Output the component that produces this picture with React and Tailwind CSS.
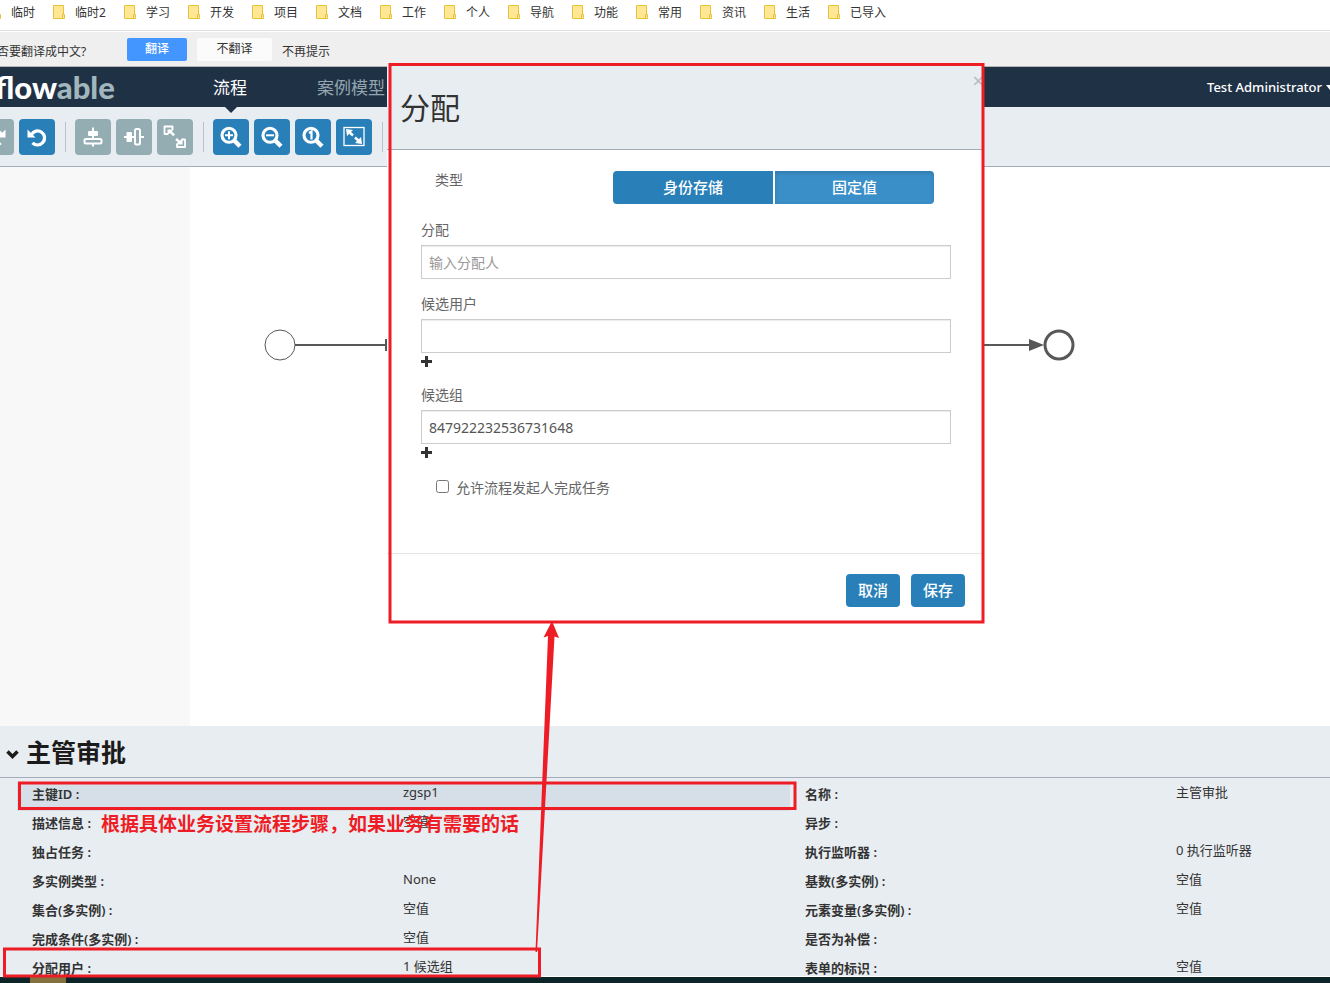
import React, { useState } from "react";

const bookmarks = ["临时", "临时2", "学习", "开发", "项目", "文档", "工作", "个人", "导航", "功能", "常用", "资讯", "生活", "已导入"];

const leftProps = [
  ["主键ID", "zgsp1"],
  ["描述信息", "空值"],
  ["独占任务", ""],
  ["多实例类型", "None"],
  ["集合(多实例)", "空值"],
  ["完成条件(多实例)", "空值"],
  ["分配用户", "1 候选组"],
];

const rightProps = [
  ["名称", "主管审批"],
  ["异步", ""],
  ["执行监听器", "0 执行监听器"],
  ["基数(多实例)", "空值"],
  ["元素变量(多实例)", "空值"],
  ["是否为补偿", ""],
  ["表单的标识", "空值"],
];

const FolderIcon = () => (
  <svg width="12" height="14" viewBox="0 0 12 14" className="shrink-0">
    <path d="M0.5 0.5h10v9h1v4h-11z" fill="#ffe793" stroke="#e8c23f" />
    <path d="M9.5 13v-3.5h1.5" fill="none" stroke="#e8c23f" />
  </svg>
);

const Icon = ({ children }) => (
  <svg width="24" height="24" viewBox="0 0 24 24" fill="none" stroke="#fff" strokeWidth="2">
    {children}
  </svg>
);

const UndoIcon = () => (
  <Icon>
    <path d="M6.500 9.500A7 7 0 1 1 7.500 17.800" strokeWidth="3.2" />
    <path d="M2.500 4.500v8h8z" fill="#fff" stroke="none" />
  </Icon>
);

const RedoIcon = () => (
  <Icon>
    <path d="M17.500 9.500A7 7 0 1 0 16.500 17.800" strokeWidth="3.2" />
    <path d="M21.500 4.500v8h-8z" fill="#fff" stroke="none" />
  </Icon>
);

const AlignVerticalIcon = () => (
  <Icon>
    <path d="M12 2.500v19" />
    <rect x="7" y="6" width="10" height="5" rx="1" fill="#fff" stroke="none" />
    <rect x="3.500" y="14" width="17" height="4.500" rx="1.500" fill="#94adb3" />
  </Icon>
);

const AlignHorizontalIcon = () => (
  <Icon>
    <path d="M2 12h20" />
    <rect x="4.500" y="7" width="5.500" height="10" rx="1" fill="#fff" stroke="none" />
    <rect x="13" y="4" width="5" height="15.500" rx="1.500" fill="#94adb3" />
  </Icon>
);

const SameSizeIcon = () => (
  <Icon>
    <path d="M5 9H1.500V1.500h8V5" strokeWidth="1.800" strokeLinejoin="round" />
    <path d="M4.500 4.500h6l-1.700 1.700 3.200 3.200-1.800 1.800L7 8l-2.500 2.300z" fill="#fff" stroke="none" />
    <path d="M18.500 14.500H22V22h-8v-3.500" strokeWidth="1.800" strokeLinejoin="round" />
    <path d="M19.500 19.500h-6.500l2-2-2.800-2.800 1.800-1.800 2.800 2.800 2.700-2.500z" fill="#fff" stroke="none" />
  </Icon>
);

const Lens = ({ children }) => (
  <Icon>
    <circle cx="10" cy="10.300" r="7" strokeWidth="3.100" />
    <path d="M15 15.300l6 6" strokeWidth="4.400" />
    {children}
  </Icon>
);

const FitIcon = () => (
  <Icon>
    <rect x="2" y="2.500" width="20" height="18" strokeWidth="1.300" />
    <path d="M6 6l5 4.500M18 17l-5-4.500" strokeWidth="2.500" />
    <path d="M4 4l7 1-6 6zM20 19l-7-1 6-6z" fill="#fff" stroke="none" />
  </Icon>
);

const ToolButton = ({ label, disabled, children }) => (
  <button
    aria-label={label}
    disabled={disabled}
    className={`flex size-9 shrink-0 items-center justify-center rounded-sm ${disabled ? "bg-[#94adb3]" : "bg-[#2980b9]"}`}
  >
    {children}
  </button>
);

const Divider = () => <span className="mr-1 ml-[5px] h-[30px] w-px shrink-0 bg-[#b9c2cc]" />;

const PropertyList = ({ items, highlight, className }) => (
  <dl className={className}>
    {items.map(([name, value], i) => (
      <div key={name} className={`flex h-[29px] items-center px-[15px] pb-1 ${highlight === i ? "bg-[#d6dfe7]" : ""}`}>
        <dt className="w-[371px] shrink-0 pt-px text-[13px] font-semibold whitespace-pre">{name} :</dt>
        <dd className="pb-1 text-[13px] whitespace-nowrap">{value}</dd>
      </div>
    ))}
  </dl>
);

const PlusButton = ({ label }) => (
  <button aria-label={label} className="flex h-[17px] items-center">
    <svg width="11" height="11" viewBox="0 0 11 11">
      <path d="M5.500 0v11M0 5.500h11" stroke="#333" strokeWidth="3" />
    </svg>
  </button>
);

const inputClass =
  "h-[34px] w-full border border-[#ccc] bg-white px-[7px] text-sm text-[#555] shadow-[inset_0_1px_1px_rgba(0,0,0,0.08)] outline-none placeholder:text-[#999]";

const AssignmentDialog = () => {
  const [assignee, setAssignee] = useState("");
  const [user, setUser] = useState("");
  const [group, setGroup] = useState("847922232536731648");
  const [allowStarter, setAllowStarter] = useState(false);

  return (
    <div role="dialog" aria-labelledby="dialog-title" className="absolute top-16 left-[387px] w-[597px] bg-white text-[#666]">
      <header className="flex h-[86px] items-start justify-between border-b border-[#a4acb9] bg-[#e8edf1] pl-[13px]">
        <h2 id="dialog-title" className="self-center pt-[2px] text-[30px] leading-10 font-normal text-[#333]">
          分配
        </h2>
        <button aria-label="关闭" className="pt-[5px] text-xl leading-6 text-[#b5babd]">
          ×
        </button>
      </header>
      <div className="flex flex-col pt-[21px] pr-[33px] pb-[55px] pl-[34px] text-sm leading-5">
        <div className="flex justify-between pr-[17px] pl-[14px]">
          <span className="-mt-px">类型</span>
          <div className="flex gap-[2px] text-[15px] font-medium text-white">
            <button className="h-[33px] w-40 rounded-l-sm bg-[#2980b9] pb-[2px]">身份存储</button>
            <button className="h-[33px] w-[159px] rounded-r-sm bg-[#3a8fc8] pb-[2px] shadow-[inset_0_2px_4px_rgba(0,0,0,0.15)]">
              固定值
            </button>
          </div>
        </div>
        <label htmlFor="assignee" className="mt-4 mb-[5px]">
          分配
        </label>
        <input
          id="assignee"
          className={inputClass}
          placeholder="输入分配人"
          value={assignee}
          onChange={(e) => setAssignee(e.target.value)}
        />
        <label htmlFor="user" className="mt-[15px] mb-[5px]">
          候选用户
        </label>
        <input id="user" className={inputClass} value={user} onChange={(e) => setUser(e.target.value)} />
        <PlusButton label="添加候选用户" />
        <label htmlFor="group" className="mt-[15px] mb-[5px]">
          候选组
        </label>
        <input id="group" className={inputClass} value={group} onChange={(e) => setGroup(e.target.value)} />
        <PlusButton label="添加候选组" />
        <label className="mt-[17px] flex items-center gap-[7px] pl-[15px]">
          <input
            type="checkbox"
            className="mb-[3px] size-[13px]"
            checked={allowStarter}
            onChange={(e) => setAllowStarter(e.target.checked)}
          />
          允许流程发起人完成任务
        </label>
      </div>
      <footer className="flex justify-end gap-[11px] border-t border-[#e5e5e5] pt-5 pr-[19px] pb-4 text-[15px] font-medium text-white">
        <button className="h-[33px] w-[54px] rounded-sm bg-[#2980b9]">取消</button>
        <button className="h-[33px] w-[54px] rounded-sm bg-[#2980b9]">保存</button>
      </footer>
    </div>
  );
};

// red marks drawn over the editor
const Annotations = () => (
  <div className="pointer-events-none absolute inset-0">
    <svg width="1330" height="983" viewBox="0 0 1330 983" fill="none" stroke="#ee1c25" strokeWidth="3">
      <rect x="390" y="64.500" width="593" height="557.500" />
      <rect x="19.500" y="783" width="775.500" height="25.500" />
      <rect x="4.500" y="949" width="535" height="27" />
      <path d="M552 621l7 17-4.500-1.500L537 952h-1.500L548 636l-4.500 1.500z" fill="#ee1c25" stroke="none" />
    </svg>
    <span className="absolute top-[812px] left-[101px] text-[19px] leading-6 font-bold whitespace-nowrap text-[#ee1c25]">
      根据具体业务设置流程步骤，如果业务有需要的话
    </span>
  </div>
);

const App = () => {
  return (
    <div
      lang="zh-CN"
      className="relative flex min-h-screen flex-col overflow-hidden bg-white font-['Noto_Sans','Noto_Sans_CJK_SC',sans-serif] text-[#333]"
    >
      <nav className="-ml-[11px] flex h-[31px] items-center border-b border-[#dcdcdf] pb-[6px] text-xs">
        {bookmarks.map((name) => (
          <a key={name} href="#" className="mr-[18px] flex shrink-0 items-center gap-[10px]">
            <FolderIcon />
            <span className="pt-[2px]">{name}</span>
          </a>
        ))}
      </nav>

      <div className="mt-px flex h-[35px] items-center border-b border-[#b5b5b5] bg-[#efefef] text-xs">
        <span className="-ml-[3px] w-[130px] shrink-0 pt-[6px]">否要翻译成中文?</span>
        <button className="mr-[10px] h-[23px] w-[60px] rounded-xs bg-[#4395ff] font-medium text-white">翻译</button>
        <button className="mr-[10px] h-[23px] w-[75px] rounded-xs bg-[#fbfbfb]">不翻译</button>
        <button className="pt-[6px]">不再提示</button>
      </div>

      <header className="flex h-10 items-center bg-[#1f3245] text-[17px]">
        <div className="-ml-[5px] w-[218px] shrink-0 pb-px font-[Lato,sans-serif] text-[31px] leading-9 font-black text-white">
          flow<span className="text-[#a1b6bd]">able</span>
        </div>
        <a href="#" className="relative flex h-10 w-[34px] shrink-0 items-center pt-[2px] text-white">
          流程
          <svg width="12" height="6" viewBox="0 0 12 6" className="absolute top-10 left-3">
            <path d="M0 0h12L6 6z" fill="#1f3245" />
          </svg>
        </a>
        <a href="#" className="ml-[70px] shrink-0 pt-[2px] text-[#93a5ae]">
          案例模型
        </a>
        <button className="-mr-1 ml-auto flex items-center gap-1 pt-px text-[13px] font-medium whitespace-nowrap text-white">
          Test Administrator
          <svg width="8" height="5" viewBox="0 0 8 5">
            <path d="M0 0h8L4 5z" fill="#fff" />
          </svg>
        </button>
      </header>

      <div className="flex h-[60px] items-center gap-[5px] border-b border-[#a4acb9] bg-[#e8edf1]">
        <div className="-ml-[22px] flex items-center gap-[5px]">
          <ToolButton label="重做" disabled>
            <RedoIcon />
          </ToolButton>
          <ToolButton label="撤销">
            <UndoIcon />
          </ToolButton>
        </div>
        <Divider />
        <ToolButton label="垂直对齐" disabled>
          <AlignVerticalIcon />
        </ToolButton>
        <ToolButton label="水平对齐" disabled>
          <AlignHorizontalIcon />
        </ToolButton>
        <ToolButton label="相同大小" disabled>
          <SameSizeIcon />
        </ToolButton>
        <Divider />
        <ToolButton label="放大">
          <Lens>
            <path d="M10 6.300v8M6 10.300h8" />
          </Lens>
        </ToolButton>
        <ToolButton label="缩小">
          <Lens>
            <path d="M6 10.300h8" />
          </Lens>
        </ToolButton>
        <ToolButton label="实际大小">
          <Lens>
            <path d="M8 8l2.500-1.500v8" strokeWidth="2.200" />
          </Lens>
        </ToolButton>
        <ToolButton label="适应屏幕">
          <FitIcon />
        </ToolButton>
        <Divider />
      </div>

      <main className="flex h-[559px]">
        <aside className="w-[190px] shrink-0 bg-[#f8f8f8]" />
        <svg width="900" height="559" viewBox="190 167 900 559" fill="none" stroke="#585858" className="shrink-0">
          <circle cx="280" cy="345" r="15" />
          <path d="M295 345h91M984 345h46" strokeWidth="2" />
          <path d="M386 339v12" strokeWidth="2" />
          <path d="M1029 339l15 6-15 6z" fill="#585858" stroke="none" />
          <circle cx="1059" cy="345" r="14" strokeWidth="3" />
        </svg>
      </main>

      <section className="h-[251px] overflow-hidden border-b border-white bg-[#e8edf1]">
        <h1 className="flex h-[52px] items-center gap-[7px] border-b border-[#a4acb9] pt-[2px] pl-[6px] text-[25px] font-bold text-[#1b1b1b]">
          <svg width="13" height="9" viewBox="0 0 13 9" className="mt-1">
            <path d="M1.500 1.500l5 5 5-5" fill="none" stroke="#1b1b1b" strokeWidth="3.500" />
          </svg>
          主管审批
        </h1>
        <div className="flex pt-1 pl-[17px]">
          <PropertyList items={leftProps} highlight={0} className="w-[773px] shrink-0" />
          <PropertyList items={rightProps} className="flex-1" />
        </div>
      </section>
      <div className="flex-1 bg-[#0b2529] pl-[30px]">
        <div className="h-[6px] w-9 bg-[#85703f]" />
      </div>

      <AssignmentDialog />
      <Annotations />
    </div>
  );
};

export default App;
